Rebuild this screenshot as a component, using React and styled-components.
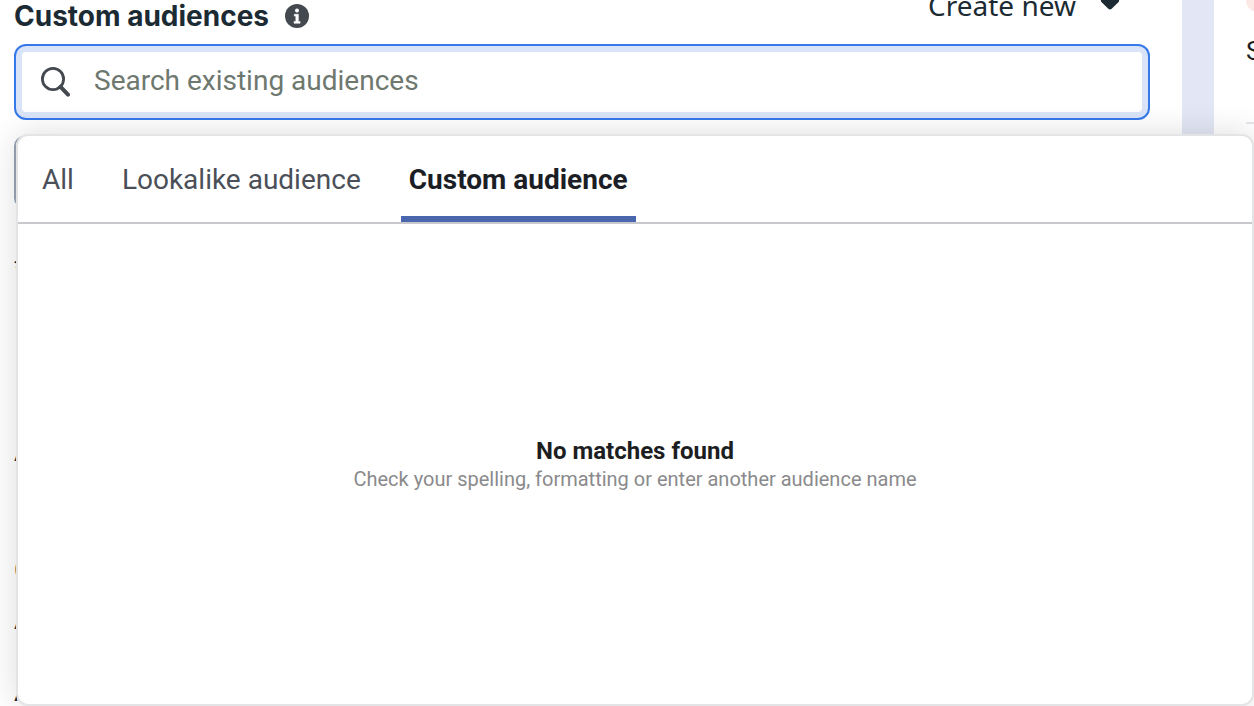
import React, { useState } from 'react';
import styled, { createGlobalStyle } from 'styled-components';

const GlobalStyle = createGlobalStyle`
    * {
        box-sizing: border-box;
    }
    body {
        margin: 0;
        background: #fff;
        font-family: Roboto, sans-serif;
        color: #1c2b33;
    }
    button,
    input {
        font-family: inherit;
    }
`
const Page = styled.div`
    display: flex;
    height: 100vh;
    overflow: hidden;
`
const Main = styled.main`
    position: relative;
    z-index: 1;
    flex: 1;
    min-width: 0;
    padding: 0 32px 0 14px;
`
const Gutter = styled.div`
    flex: 0 0 32px;
    background: #e3e7f5;
`
const Aside = styled.aside`
    flex: 0 0 40px;
    padding-left: 32px;
    overflow: hidden;
`
const AsideDot = styled.div`
    width: 24px;
    height: 24px;
    margin-top: -12px;
    border-radius: 50%;
    background: #fce9e6;
`
const AsideText = styled.div`
    height: 112px;
    padding-top: 23px;
    font-size: 26px;
    line-height: 32px;
    color: #1c1e21;
    border-bottom: 2px solid #e4e6e9;
`
const Header = styled.header`
    display: flex;
    justify-content: space-between;
    height: 68px;
    margin-top: -24px;
`
const Title = styled.div`
    display: flex;
    align-items: center;
    align-self: flex-end;
    gap: 16px;
    padding-bottom: 12px;
`
const Heading = styled.h2`
    margin: 0;
    font-family: Inter, sans-serif;
    font-size: 28px;
    font-weight: 700;
    line-height: 32px;
`
const CreateButton = styled.button`
    display: flex;
    align-items: center;
    gap: 24px;
    height: 58px;
    padding: 0 30px;
    border: none;
    background: none;
    color: #1c2b33;
    font-family: "Noto Sans", sans-serif;
    font-size: 28px;
    line-height: 32px;
`
const SearchArea = styled.div`
    position: relative;
`
const FocusRing = styled.div`
    height: 76px;
    padding: 6px;
    border: 2px solid #3578ea;
    border-radius: 12px;
    background: #d9e4f8;
`
const SearchField = styled.label`
    display: flex;
    align-items: center;
    gap: 24px;
    height: 100%;
    padding: 0 18px;
    border-radius: 4px;
    background: #fff;
`
const SearchInput = styled.input`
    flex: 1;
    min-width: 0;
    padding: 0 0 2px;
    border: none;
    outline: none;
    background: transparent;
    font-size: 28px;
    line-height: 36px;
    color: #1c1e21;

    &::placeholder {
        color: #6e786f;
        opacity: 1;
    }
`
const Popover = styled.section`
    position: absolute;
    top: 90px;
    left: 2px;
    right: -104px;
    height: 572px;
    display: flex;
    flex-direction: column;
    border: 2px solid #e3e4e5;
    border-radius: 12px;
    background: #fff;
    box-shadow: 0 0 32px rgba(0, 0, 0, 0.14);
`
const Tabs = styled.div`
    display: flex;
    gap: 32px;
    flex: 0 0 88px;
    padding: 0 16px;
    border-bottom: 2px solid #c8c8cd;
`
const Tab = styled.button`
    padding: 8px 8px 0;
    border: none;
    border-bottom: 6px solid ${(props) => (props.$active ? '#4a66ad' : 'transparent')};
    background: none;
    color: ${(props) => (props.$active ? '#1c1e26' : '#4b4f58')};
    font-size: 28px;
    font-weight: ${(props) => (props.$active ? 700 : 400)};
    line-height: 36px;
`
const Empty = styled.div`
    flex: 1;
    display: flex;
    flex-direction: column;
    align-items: center;
    justify-content: center;
    padding-top: 2px;
    text-align: center;
`
const EmptyTitle = styled.p`
    margin: 0;
    font-size: 24px;
    font-weight: 700;
    line-height: 28px;
    color: #1c1e21;
`
const EmptyText = styled.p`
    margin: 0;
    font-size: 20px;
    line-height: 28px;
    color: #8a8a8c;
`
const LocationBox = styled.div`
    height: 72px;
    margin-top: 16px;
    border: 2px solid #98a5b4;
    border-radius: 10px;
`
const Row = styled.div`
    height: ${(props) => props.$height}px;
    padding-top: ${(props) => props.$height - 32}px;
    font-size: 26px;
    line-height: 32px;
`

const tabs = ['All', 'Lookalike audience', 'Custom audience'];

function InfoIcon() {
    return (
        <svg width="24" height="24" viewBox="0 0 24 24" aria-hidden="true">
            <circle cx="12" cy="12" r="12" fill="#444950" />
            <circle cx="12" cy="6.5" r="2" fill="#fff" />
            <path d="M9.3 10.2h4.1v7.2h1.7v1.9H9v-1.9h1.8v-5.3H9.3z" fill="#fff" stroke="#fff" strokeWidth=".5" strokeLinejoin="round" />
        </svg>
    )
}

function SearchIcon() {
    return (
        <svg width="30" height="30" viewBox="0 0 30 30" fill="none" stroke="#444950" aria-hidden="true">
            <circle cx="13" cy="12" r="10.6" strokeWidth="2.8" />
            <path d="M20.6 19.8l7.4 7.8" strokeWidth="4" strokeLinecap="round" />
        </svg>
    )
}

function CaretIcon() {
    return (
        <svg width="20" height="12" viewBox="0 0 20 12" aria-hidden="true">
            <path d="M2.6 0h14.8c1.6 0 2.3 1.8 1.2 2.9l-6.9 6.8c-1 1-2.4 1-3.4 0L1.4 2.9C.3 1.8 1 0 2.6 0z" fill="#1c2b33" />
        </svg>
    )
}

function App() {
    const [active, setActive] = useState('Custom audience');
    const [query, setQuery] = useState('');

    return (
        <Page>
            <GlobalStyle />
            <Main>
                <Header>
                    <Title>
                        <Heading>Custom audiences</Heading>
                        <InfoIcon />
                    </Title>
                    <CreateButton type="button">
                        Create new
                        <CaretIcon />
                    </CreateButton>
                </Header>
                <SearchArea>
                    <FocusRing>
                        <SearchField>
                            <SearchIcon />
                            <SearchInput
                                type="text"
                                aria-label="Search existing audiences"
                                placeholder="Search existing audiences"
                                value={query}
                                onChange={(e) => setQuery(e.target.value)}
                            />
                        </SearchField>
                    </FocusRing>
                    <Popover>
                        <Tabs role="tablist">
                            {tabs.map((name) => (
                                <Tab
                                    key={name}
                                    type="button"
                                    role="tab"
                                    aria-selected={name === active}
                                    $active={name === active}
                                    onClick={() => setActive(name)}
                                >
                                    {name}
                                </Tab>
                            ))}
                        </Tabs>
                        <Empty>
                            <EmptyTitle>No matches found</EmptyTitle>
                            <EmptyText>Check your spelling, formatting or enter another audience name</EmptyText>
                        </Empty>
                    </Popover>
                </SearchArea>
                <LocationBox />
                <Row $height={76}>*</Row>
                <Row $height={184}>A</Row>
                <Row $height={118}>C</Row>
                <Row $height={50}>A</Row>
                <Row $height={72}>A</Row>
            </Main>
            <Gutter />
            <Aside>
                <AsideDot />
                <AsideText>S</AsideText>
            </Aside>
        </Page>
    )
}

export default App
